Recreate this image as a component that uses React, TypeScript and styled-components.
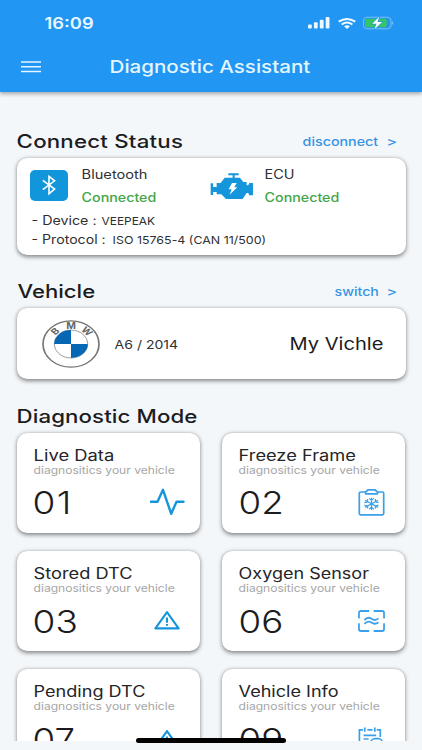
import React from "react";
import styled, { createGlobalStyle } from "styled-components";

const Global = createGlobalStyle`
  * { box-sizing: border-box; }
  body { margin: 0; background: #f3f7fa; font-family: Inter, "Liberation Sans", sans-serif; }
`;

const Screen = styled.div`
  width: 422px;
  height: 750px;
  overflow: hidden;
  position: relative;
  background: #f3f7fa;
`;

/* Single line of wide-set text; $w is its layout width, $k its horizontal stretch. */
const Text = styled.span<{
  $size: number; $k: number; $w: number; $line: number;
  $weight?: number; $color?: string; $dx?: number; $dy?: number; $track?: number;
}>`
  display: block;
  flex: none;
  width: ${(p) => p.$w}px;
  margin-left: ${(p) => p.$dx ?? 0}px;
  height: ${(p) => p.$line}px;
  line-height: ${(p) => p.$line}px;
  font-size: ${(p) => p.$size}px;
  font-weight: ${(p) => p.$weight ?? 400};
  letter-spacing: ${(p) => p.$track ?? 0}px;
  color: ${(p) => p.$color ?? "#303033"};
  white-space: pre;
  transform: translate(0.6px, ${(p) => p.$dy ?? 0.5}px) scaleX(${(p) => p.$k});
  transform-origin: 0 50%;
`;

const Header = styled.header`
  position: relative;
  z-index: 2;
  height: 91.7px;
  background: #2196f3;
  box-shadow: 0 2px 4px rgba(0, 0, 0, 0.32);
`;
const StatusBar = styled.div`
  display: flex;
  align-items: center;
  height: 46px;
  padding-left: 44px;
`;
const Signals = styled.div`
  display: flex;
  align-items: center;
  gap: 8px;
  margin-left: 214.2px;
`;
const NavBar = styled.div`
  display: flex;
  align-items: center;
  height: 42px;
  padding-left: 20.7px;
`;
const Icon = styled.svg`
  display: block;
  flex: none;
  overflow: visible;
`;

const Content = styled.main`
  height: 649px;
  overflow: hidden;
  padding: 32.3px 16.5px 0 16.5px;
`;
const SectionHead = styled.div<{ $gap?: number }>`
  display: flex;
  align-items: center;
  justify-content: space-between;
  height: 34px;
  margin-top: ${(p) => p.$gap ?? 0}px;
`;
const Action = styled.div`
  display: flex;
  padding-right: 10px;
`;
const Card = styled.section`
  background: #fff;
  border-radius: 10px;
  box-shadow: 0 1.5px 4.5px rgba(0, 0, 0, 0.46), 0 0 1px rgba(0, 0, 0, 0.2);
`;
const StatusCard = styled(Card)`
  height: 97.2px;
  padding: 5.5px 0 0 13.4px;
`;
const Links = styled.div`
  display: flex;
  height: 46px;
`;
const BluetoothTile = styled.div`
  display: flex;
  align-items: center;
  justify-content: center;
  width: 38px;
  height: 31.3px;
  margin: 6.3px 13.3px 0 0;
  border-radius: 5px;
  background: #1195db;
`;
const EngineBox = styled.div`
  width: 43.3px;
  margin: 9.2px 10.6px 0 46.1px;
`;
const Detail = styled.div<{ $gap?: number }>`
  display: flex;
  align-items: center;
  height: 19px;
  margin-top: ${(p) => p.$gap ?? 0}px;
`;
const VehicleCard = styled(Card)`
  display: flex;
  align-items: center;
  height: 71.4px;
  padding: 0 0 0 25.2px;
`;
const Grid = styled.div`
  display: grid;
  grid-template-columns: 183.7px 183.7px;
  column-gap: 21.5px;
  row-gap: 18px;
`;
const ModeCard = styled(Card)`
  height: 100.4px;
  padding: 12px 0 0 16.5px;
`;
const NumberRow = styled.div`
  display: flex;
  align-items: center;
  height: 36px;
  margin-top: 8.6px;
`;
const IconSlot = styled.div`
  display: flex;
  justify-content: center;
  width: 40px;
  margin-left: 74.2px;
`;
const HomeIndicator = styled.div`
  position: absolute;
  z-index: 3;
  left: 136px;
  top: 738.2px;
  width: 150px;
  height: 4.4px;
  border-radius: 3px;
  background: #000;
`;

const blue = "#1595db";
const sky = "#3aa0ec";
const link = "#3894e4";
const green = "#43a54a";
const ink = "#1c1c1e";

const PulseIcon = () => (
  <Icon width="36" height="28" viewBox="0 0 36 28" fill="none" stroke={blue} strokeWidth="2.4" strokeLinecap="round" strokeLinejoin="round">
    <path d="M2 13.7H8.5L14 1.8L22.2 25.8L27.5 13.7H34.5" />
  </Icon>
);

const FreezeIcon = () => (
  <Icon width="27" height="27" viewBox="0 0 27 27" fill="none" stroke={sky} strokeWidth="1.7" strokeLinejoin="round">
    <path d="M7 3H2.6Q1.3 3 1.3 4.2V24.6Q1.3 25.8 2.6 25.8H24.4Q25.7 25.8 25.7 24.6V4.2Q25.7 3 24.4 3H20" />
    <path d="M7.5 4.8V3.2Q7.5 2.5 8.5 2.4L9.8 .9H17.2L18.5 2.4Q19.5 2.5 19.5 3.2V4.8Z" />
    <path strokeWidth="1.2" d="M13.5 8.7V20.9M7 11.3L20 18.4M7 18.4L20 11.3M11.2 9.4L13.5 11.4L15.8 9.4M11.2 20.2L13.5 18.2L15.8 20.2M6.4 13.6L9.6 12.8V10.1M20.6 13.6L17.4 12.8V10.1M6.4 16.1L9.6 17V19.6M20.6 16.1L17.4 17V19.6" />
  </Icon>
);

const WarningIcon = () => (
  <Icon width="26" height="19" viewBox="0 0 26 19" fill="none" stroke={blue} strokeWidth="2.1" strokeLinejoin="round">
    <path d="M13 1.2L24.6 17.4H1.4Z" />
    <path d="M13 6.5V11.7M13 13V14.8" />
  </Icon>
);

const OxygenIcon = () => (
  <Icon width="27" height="22" viewBox="0 0 28 22" preserveAspectRatio="none" fill="none" stroke={sky} strokeWidth="1.8">
    <path d="M11.6 1H3Q1 1 1 2.7V8.6M16.2 1H25Q27 1 27 2.7V8.6M1 13.2V19.3Q1 21 3 21H11.6M16.2 21H25Q27 21 27 19.3V13.2" />
    <path d="M6.6 10Q10.3 6.3 14 8.8T21.2 8.4M6.6 13.8Q10.3 10.1 14 12.6T21.2 12.2" />
  </Icon>
);

const InfoIcon = () => (
  <Icon width="27" height="24" viewBox="0 0 27 24" fill="none" stroke={sky} strokeWidth="1.7">
    <path d="M5 2.9H1.4V23H12M9.3 2.9H14.6M18.8 2.9H22.3V9.9M6.8 .5V4.8M16.8 .5V4.8M5.5 8.3H18.2M5.5 12H10.5" />
    <rect x="12.6" y="11.7" width="12" height="10.5" rx="4.5" />
  </Icon>
);

const Roundel = () => (
  <Icon width="58" height="48" viewBox="-50 -50 100 100" preserveAspectRatio="none">
    <circle r="48.3" fill="#fff" stroke="#737373" strokeWidth="2.8" />
    <circle r="29" fill="#fff" stroke="#8a8a8a" strokeWidth="1.6" />
    <path d="M0 0V-29A29 29 0 0 0 -29 0ZM0 0V29A29 29 0 0 0 29 0Z" fill="#0668b5" />
    <g fill="#666" fontSize="18" fontWeight="700" textAnchor="middle">
      <text transform="translate(-27.5 -26.5) rotate(-45)" y="6.2">B</text>
      <text y="-31.5">M</text>
      <text transform="translate(27.5 -26.5) rotate(45)" y="6.2">W</text>
    </g>
  </Icon>
);

const modes = [
  { title: "Live Data", k: 1.21, no: "01", nk: 1.2, nt: 1, icon: <PulseIcon /> },
  { title: "Freeze Frame", k: 1.2, no: "02", nk: 1.19, nt: 0, icon: <FreezeIcon /> },
  { title: "Stored DTC", k: 1.2, no: "03", nk: 1.2, nt: 0, icon: <WarningIcon /> },
  { title: "Oxygen Sensor", k: 1.185, no: "06", nk: 1.19, nt: 0, icon: <OxygenIcon /> },
  { title: "Pending DTC", k: 1.19, no: "07", nk: 1.19, nt: 0, icon: <WarningIcon /> },
  { title: "Vehicle Info", k: 1.19, no: "09", nk: 1.19, nt: 0, icon: <InfoIcon /> },
];

export default function App() {
  return (
    <Screen>
      <Global />
      <Header>
        <StatusBar>
          <Text $size={15.5} $k={1.18} $w={50} $dx={0.2} $line={20} $weight={600} $color="#e9f8ff">16:09</Text>
          <Signals>
            <Icon width="22" height="12" viewBox="0 0 22 12" fill="#eefaff">
              <rect x="0" y="7.4" width="3.8" height="4" rx="1" />
              <rect x="5.9" y="5.3" width="3.8" height="6.1" rx="1" />
              <rect x="11.8" y="2.7" width="3.8" height="8.7" rx="1" />
              <rect x="17.7" y="0" width="3.8" height="11.4" rx="1" />
            </Icon>
            <Icon width="18" height="11" viewBox="0 0 18 11" fill="none" stroke="#eefaff" strokeWidth="2">
              <path d="M.7 3.7Q9 -1.9 17.3 3.7M3.6 6.5Q9 2.6 14.4 6.5" />
              <path d="M6 8.3Q9 6.3 12 8.3L9 10.9Z" fill="#eefaff" stroke="none" />
            </Icon>
            <Icon width="30" height="12" viewBox="0 0 30 12">
              <rect x="-.5" y=".2" width="27.5" height="11.6" rx="3.4" fill="none" stroke="#79c1f8" />
              <rect x="1.2" y="1.8" width="21.5" height="8.4" rx="2" fill="#35c662" />
              <path d="M27.8 4v4q1.4-.6 1.4-2t-1.4-2z" fill="#79c1f8" />
              <path d="M15.3 -.2L8.1 6.8H12.5L10.5 12.2L18.1 5H13.5Z" fill="#fff" stroke="#2196f3" strokeWidth="1.2" paintOrder="stroke" />
            </Icon>
          </Signals>
        </StatusBar>
        <NavBar>
          <Icon width="20" height="12" viewBox="0 0 20 12" fill="#e4f6ff">
            <path d="M0 .2h20v1.6H0zM0 4.9h20v1.6H0zM0 9.7h20v1.6H0z" />
          </Icon>
          <Text $size={17.2} $k={1.195} $w={202} $dx={68.6} $dy={0} $line={24} $weight={500} $color="#e4f6ff">Diagnostic Assistant</Text>
        </NavBar>
      </Header>

      <Content>
        <SectionHead>
          <Text $size={18.4} $k={1.21} $track={0.17} $w={170} $dx={-0.3} $dy={-0.3} $line={24} $weight={500} $color={ink}>Connect Status</Text>
          <Action>
            <Text $size={12.3} $k={1.16} $w={83.5} $line={18} $weight={500} $color={link}>disconnect</Text>
            <Text $size={12.3} $k={1.3} $w={10} $line={18} $weight={500} $color={link}>&gt;</Text>
          </Action>
        </SectionHead>
        <StatusCard>
          <Links>
            <BluetoothTile>
              <Icon width="14" height="20" viewBox="0 0 14 20" fill="none" stroke="#fff" strokeWidth="1.6">
                <path d="M.8 5.3L12.6 14L7 18.7V1.3L12.6 5.8L.8 14.6" />
              </Icon>
            </BluetoothTile>
            <div>
              <Text $size={12.4} $k={1.18} $w={83} $dx={-0.3} $dy={0.2} $line={23}>Bluetooth</Text>
              <Text $size={12.4} $k={1.15} $w={83} $dy={0.2} $line={23} $weight={450} $color={green}>Connected</Text>
            </div>
            <EngineBox>
              <Icon width="43.3" height="26.7" viewBox="18 20 130 80" fill={blue}>
                <path d="M73 21h31v6H73zM86 26h6v9h-6zM62 34H108L118 47H128V57H133L136 50H147V87H136L133 80H128L116 98H66L52 84H38V77H27V86H20V51H27V62H38V50H50Z" />
                <path fill="#fff" d="M84 50H98L91 63H100L77 85L83 69H74Z" />
              </Icon>
            </EngineBox>
            <div>
              <Text $size={12.4} $k={1.16} $w={83} $dx={0} $dy={0.2} $line={23}>ECU</Text>
              <Text $size={12.4} $k={1.15} $w={83} $dy={0.2} $line={23} $weight={450} $color={green}>Connected</Text>
            </div>
          </Links>
          <Detail $gap={2}>
            <Text $size={12.4} $k={1.15} $w={69} $dx={1.2} $dy={0} $line={18}>- Device :</Text>
            <Text $size={11} $k={1.08} $w={60} $dx={0.6} $dy={0.2} $line={18}>VEEPEAK</Text>
          </Detail>
          <Detail>
            <Text $size={12.4} $k={1.14} $w={81} $dx={1.2} $dy={0} $line={18}>- Protocol :</Text>
            <Text $size={11} $k={1.13} $w={160} $dx={0.4} $dy={0.2} $line={18}>ISO 15765-4 (CAN 11/500)</Text>
          </Detail>
        </StatusCard>

        <SectionHead $gap={18.8}>
          <Text $size={18.4} $k={1.2} $w={90} $dx={0.4} $dy={-0.3} $line={24} $weight={500} $color={ink}>Vehicle</Text>
          <Action>
            <Text $size={12.3} $k={1.15} $w={52} $line={18} $weight={500} $color={link}>switch</Text>
            <Text $size={12.3} $k={1.3} $w={10} $line={18} $weight={500} $color={link}>&gt;</Text>
          </Action>
        </SectionHead>
        <VehicleCard>
          <Roundel />
          <Text $size={12.2} $k={1.15} $w={100} $dx={14.1} $line={18}>A6 / 2014</Text>
          <Text $size={16.6} $k={1.21} $w={94} $dx={75.3} $dy={0.2} $line={22} $color={ink}>My Vichle</Text>
        </VehicleCard>

        <SectionHead $gap={19.3}>
          <Text $size={18.4} $k={1.21} $track={0.08} $w={190} $dx={-0.6} $dy={-0.3} $line={24} $weight={500} $color={ink}>Diagnostic Mode</Text>
        </SectionHead>
        <Grid>
          {modes.map((m) => (
            <ModeCard key={m.no}>
              <Text $size={15.2} $k={m.k} $w={150} $dx={-0.4} $line={20} $color="#252527">{m.title}</Text>
              <Text $size={10.7} $k={1.13} $w={150} $dx={-0.5} $dy={0.2} $line={11} $color="#a6a6a6">diagnositics your vehicle</Text>
              <NumberRow>
                <Text $size={30.8} $k={m.nk} $track={m.nt} $w={40} $dx={-0.6} $line={36} $weight={300} $color={ink}>{m.no}</Text>
                <IconSlot>{m.icon}</IconSlot>
              </NumberRow>
            </ModeCard>
          ))}
        </Grid>
      </Content>
      <HomeIndicator />
    </Screen>
  );
}
